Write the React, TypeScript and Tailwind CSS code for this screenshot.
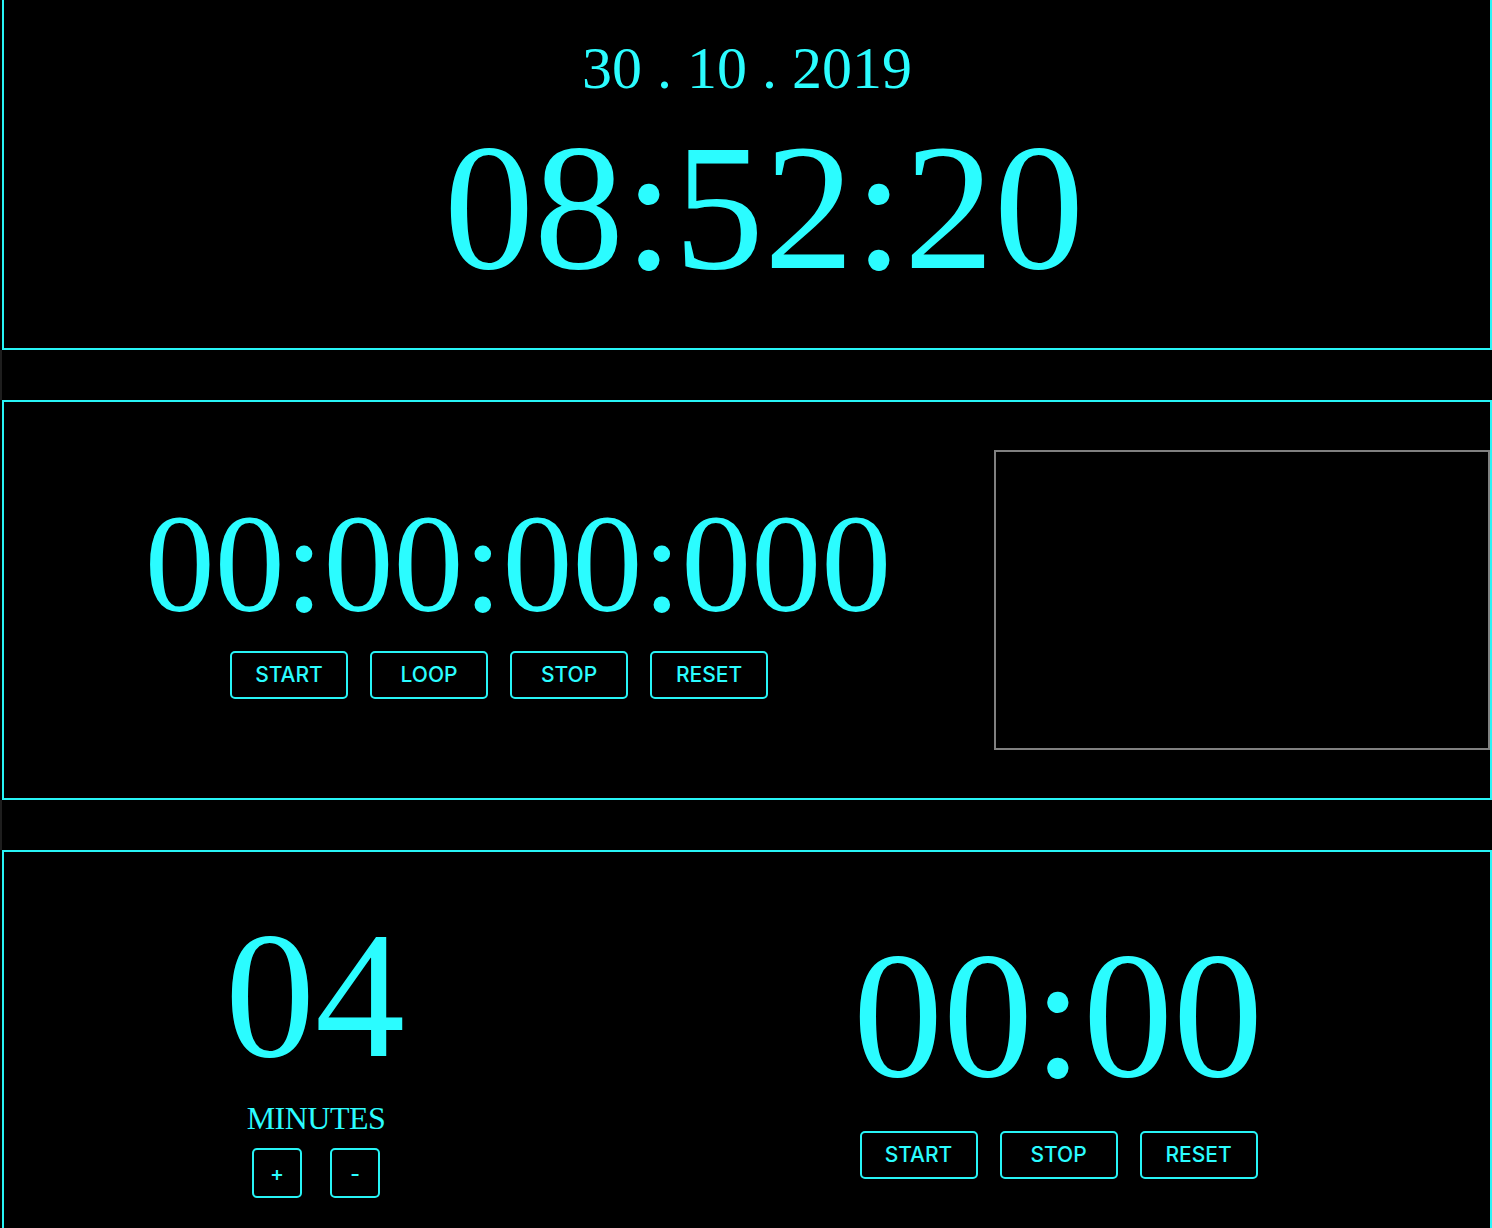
import { useEffect, useState } from 'react';

const serif = "font-['Liberation_Serif','Times_New_Roman',serif]";
const sans = "font-['Inter','Liberation_Sans',Arial,sans-serif]";

function Btn({ label, wide = true }: { label: string; wide?: boolean }) {
  return (
    <button
      className={`${sans} ${wide ? 'w-[118px] h-[48px]' : 'w-[50px] h-[50px]'} border-2 border-[#27f4f6] rounded-[5px] text-[21px] font-medium text-[#2bfcff] bg-black leading-none`}
    >
      {label}
    </button>
  );
}

function Gap() {
  return <div className="h-[50px] border-l-2 border-[#1e1e1e]" />;
}

export default function App() {
  const [minutes] = useState(4);
  const [now, setNow] = useState('08:52:20');

  useEffect(() => {
    // keep the captured time fixed, just like the screenshot
    setNow('08:52:20');
  }, []);

  return (
    <div className="min-h-screen bg-black text-[#2bfcff]">
      {/* clock */}
      <div className="ml-[2px] h-[350px] border-x-2 border-b-2 border-[#27f4f6] flex flex-col items-center pt-[38px]">
        <div className={`${serif} text-[60px] leading-none`}>30 . 10 . 2019</div>
        <div className={`${serif} text-[180px] leading-none mt-[20px] pl-[34px]`}>{now}</div>
      </div>

      <Gap />

      {/* stopwatch */}
      <div className="ml-[2px] h-[400px] border-2 border-[#27f4f6] flex items-center">
        <div className="w-[990px] flex flex-col items-center mb-[8px]">
          <div className={`${serif} text-[140px] leading-none pl-[38px]`}>00:00:00:000</div>
          <div className="flex gap-[22px] mt-[17px]">
            <Btn label="START" />
            <Btn label="LOOP" />
            <Btn label="STOP" />
            <Btn label="RESET" />
          </div>
        </div>
        <div className="w-[496px] h-[300px] border-2 border-[#808080]" />
      </div>

      <Gap />

      {/* timer */}
      <div className="ml-[2px] h-[404px] border-2 border-[#27f4f6] grid grid-cols-[622px_1fr] items-center">
        <div className="flex flex-col items-center">
          <div className={`${serif} text-[180px] leading-none`}>{String(minutes).padStart(2, '0')}</div>
          <div className={`${serif} text-[32px] leading-none mt-[16px] pl-[2px] tracking-[-0.5px]`}>MINUTES</div>
          <div className="flex gap-[28px] mt-[14px] pl-[2px]">
            <Btn label="+" wide={false} />
            <Btn label="-" wide={false} />
          </div>
        </div>
        <div className="flex flex-col items-center">
          <div className={`${serif} text-[180px] leading-none`}>00:00</div>
          <div className="flex gap-[22px] mt-[25px] pl-[1px]">
            <Btn label="START" />
            <Btn label="STOP" />
            <Btn label="RESET" />
          </div>
        </div>
      </div>
    </div>
  );
}
